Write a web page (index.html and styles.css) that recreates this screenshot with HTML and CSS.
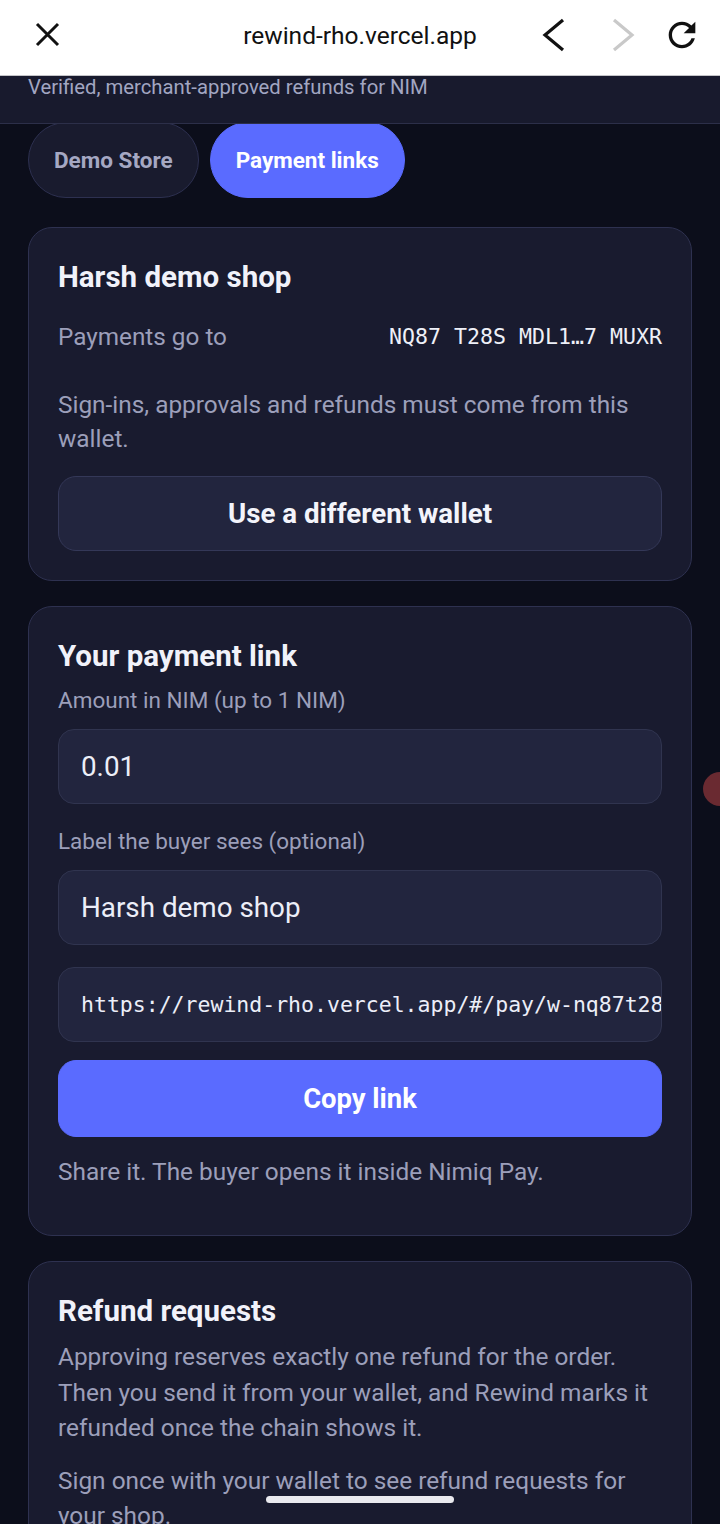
FILE: index.html
```html
<!DOCTYPE html>
<html lang="en">
<head>
  <meta charset="UTF-8">
  <meta name="viewport" content="width=device-width, initial-scale=1.0">
  <title>Rewind</title>
  <link rel="stylesheet" href="styles.css">
</head>
<body>

  <!-- browser chrome -->
  <div class="browser-bar">
    <div class="bar-left">
      <svg class="bar-icon" width="40" height="40" viewBox="0 0 40 40">
        <path d="M9 9 L30 30 M30 9 L9 30" stroke="#111" stroke-width="3" fill="none"/>
      </svg>
    </div>
    <div class="bar-url">rewind-rho.vercel.app</div>
    <div class="bar-right">
      <svg class="bar-icon nav-back" width="40" height="40" viewBox="0 0 40 40">
        <path d="M29 5 L11 20 L29 35" stroke="#111" stroke-width="3.2" fill="none"/>
      </svg>
      <svg class="bar-icon nav-fwd" width="40" height="40" viewBox="0 0 40 40">
        <path d="M11 5 L29 20 L11 35" stroke="#c9c9c9" stroke-width="3.2" fill="none"/>
      </svg>
      <svg class="bar-icon nav-reload" width="40" height="40" viewBox="0 0 24 24">
        <path fill="#111" d="M17.65 6.35C16.2 4.9 14.21 4 12 4c-4.42 0-7.99 3.58-7.99 8s3.57 8 7.99 8c3.73 0 6.84-2.55 7.73-6h-2.08c-.82 2.33-3.04 4-5.65 4-3.31 0-6-2.69-6-6s2.69-6 6-6c1.66 0 3.14.69 4.22 1.78L13 11h7V4l-2.35 2.35z"/>
      </svg>
    </div>
  </div>

  <header class="app-header">
    <p class="tagline">Verified, merchant-approved refunds for NIM</p>
  </header>

  <main class="page">
    <nav class="tabs">
      <button class="tab">Demo Store</button>
      <button class="tab tab-active">Payment links</button>
    </nav>

    <!-- shop -->
    <section class="card">
      <h2 class="card-title">Harsh demo shop</h2>
      <div class="pay-row">
        <span class="muted">Payments go to</span>
        <span class="address">NQ87 T28S MDL1…7 MUXR</span>
      </div>
      <p class="note note-wallet">Sign-ins, approvals and refunds must come from this wallet.</p>
      <button class="btn btn-dark">Use a different wallet</button>
    </section>

    <!-- link -->
    <section class="card">
      <h2 class="card-title">Your payment link</h2>
      <label class="field-label">Amount in NIM (up to 1 NIM)</label>
      <div class="field">0.01</div>
      <label class="field-label label-gap">Label the buyer sees (optional)</label>
      <div class="field">Harsh demo shop</div>
      <div class="field field-url">https://rewind-rho.vercel.app/#/pay/w-nq87t28smdl17muxr</div>
      <button class="btn btn-primary">Copy link</button>
      <p class="note note-share">Share it. The buyer opens it inside Nimiq Pay.</p>
    </section>

    <!-- refunds -->
    <section class="card">
      <h2 class="card-title">Refund requests</h2>
      <p class="text">Approving reserves exactly one refund for the order. Then you send it from your wallet, and Rewind marks it refunded once the chain shows it.</p>
      <p class="text text-next">Sign once with your wallet to see refund requests for your shop.</p>
    </section>
  </main>

  <div class="float-dot"></div>
  <div class="home-indicator"></div>

</body>
</html>
```

FILE: styles.css
```css
* {
  box-sizing: border-box;
}
html, body {
  height: 1524px;
  overflow: hidden;
}
body {
  margin: 0;
  font-family: Roboto, "Noto Sans", sans-serif;
  background: #0c0e1b;
  color: #eceef8;
}

/* browser chrome */
.browser-bar {
  height: 76px;
  background: #fff;
  border-bottom: 1px solid #c4c4c8;
  display: grid;
  grid-template-columns: 1fr auto 1fr;
  align-items: center;
  position: relative;
  z-index: 3;
}
.bar-left {
  padding-left: 28px;
  display: flex;
}
.bar-url {
  font-size: 24.5px;
  color: #111;
  margin-top: -4px;
}
.bar-right {
  display: flex;
  justify-content: flex-end;
  padding-right: 18px;
}
.bar-icon {
  display: block;
  margin-top: -6px;
}
.nav-fwd {
  margin-left: 29px;
}
.nav-reload {
  margin-left: 19px;
}

/* header */
.app-header {
  height: 48px;
  background: #181a2d;
  border-bottom: 1px solid #2c2f49;
  padding: 0 28px;
  position: relative;
  z-index: 2;
}
.tagline {
  margin: 0;
  font-size: 20.3px;
  line-height: 22px;
  color: #a2a6c2;
}

.page {
  padding: 0 28px;
}

.tabs {
  display: flex;
  gap: 11px;
  margin-top: -2px;
}
.tab {
  height: 76px;
  padding: 0 25px;
  border-radius: 38px;
  border: 1px solid #2d3050;
  background: #191b2e;
  color: #a5a8c3;
  font-family: Roboto, sans-serif;
  font-size: 22.5px;
  font-weight: 700;
}
.tab-active {
  background: #5a6bff;
  border-color: #5a6bff;
  color: #fff;
}

/* cards */
.card {
  margin-top: 25px;
  background: #191b2f;
  border: 1px solid #2e3150;
  border-radius: 24px;
  padding: 32px 29px 29px;
}
.tabs + .card {
  margin-top: 29px;
}
.card-title {
  margin: 0;
  font-size: 29.5px;
  line-height: 34px;
  font-weight: 700;
  color: #f1f2fa;
}
.muted {
  color: #9c9fba;
}
.pay-row {
  margin-top: 28px;
  display: flex;
  justify-content: space-between;
  align-items: center;
  font-size: 24.3px;
  line-height: 30px;
}
.address {
  font-family: "DejaVu Sans Mono", "Liberation Mono", monospace;
  font-size: 21.6px;
  color: #eef0f8;
}
.note {
  margin: 0;
  font-size: 24.4px;
  line-height: 34px;
  color: #9c9fba;
}
.note-wallet {
  margin-top: 36px;
}
.note-share {
  margin-top: 18px;
  margin-bottom: 17px;
}

.btn {
  display: block;
  width: 100%;
  border-radius: 18px;
  font-family: Roboto, sans-serif;
  font-weight: 700;
  color: #f3f4fb;
}
.btn-dark {
  margin-top: 20px;
  height: 75px;
  background: #22253e;
  border: 1px solid #343858;
  font-size: 27.7px;
}
.btn-primary {
  margin-top: 18px;
  height: 77px;
  background: #5a6bff;
  border: 1px solid #5a6bff;
  font-size: 27.4px;
  color: #fff;
}

.field-label {
  display: block;
  margin-top: 13px;
  font-size: 22.5px;
  line-height: 28px;
  color: #9c9fba;
}
.label-gap {
  margin-top: 23px;
}
.field {
  margin-top: 15px;
  height: 75px;
  display: flex;
  align-items: center;
  padding: 0 22px;
  background: #22253e;
  border: 1px solid #30344f;
  border-radius: 16px;
  font-size: 27.8px;
  color: #eceef8;
  white-space: nowrap;
  overflow: hidden;
}
.field-url {
  margin-top: 22px;
  font-family: "DejaVu Sans Mono", "Liberation Mono", monospace;
  font-size: 21.5px;
  padding-right: 0;
}

.text {
  margin: 11px 0 0;
  font-size: 24.4px;
  line-height: 35.5px;
  color: #9c9fba;
}
.text-next {
  margin-top: 17px;
}

/* overlays */
.float-dot {
  position: fixed;
  left: 703px;
  top: 772px;
  width: 34px;
  height: 34px;
  border-radius: 50%;
  background: #6a2a31;
}
.home-indicator {
  position: fixed;
  left: 266px;
  top: 1496px;
  width: 188px;
  height: 7px;
  border-radius: 4px;
  background: #e9e9ee;
}
```
